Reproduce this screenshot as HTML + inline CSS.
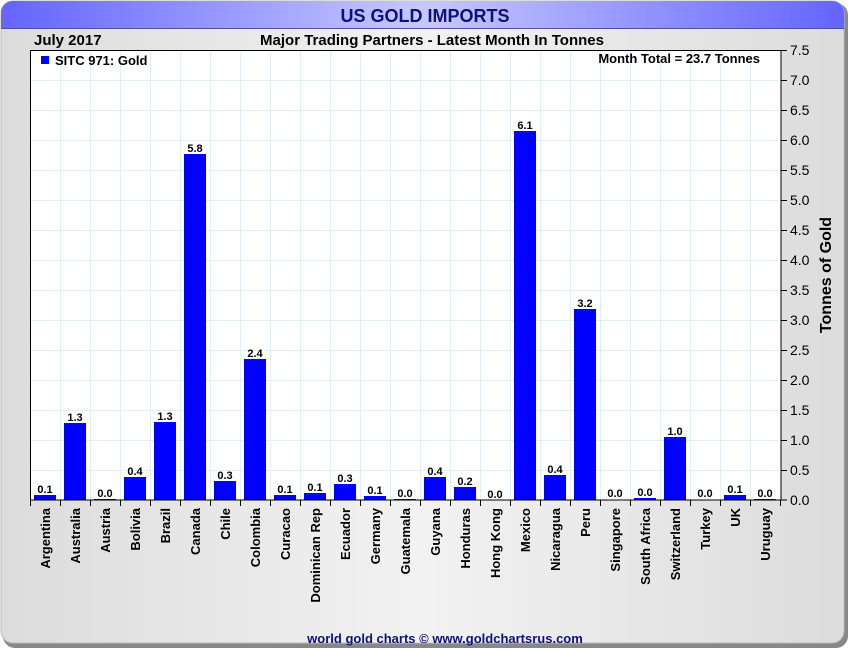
<!DOCTYPE html>
<html><head><meta charset="utf-8"><style>
html,body{margin:0;padding:0;background:#fff;width:850px;height:650px;overflow:hidden}
svg{display:block;font-family:"Liberation Sans",Arial,sans-serif}
</style></head><body>
<svg width="850" height="650" viewBox="0 0 850 650" xmlns="http://www.w3.org/2000/svg">
<defs>
<linearGradient id="tb" x1="0" x2="1" y1="0" y2="0">
<stop offset="0" stop-color="#6464ff"/><stop offset="0.5" stop-color="#c8c8ff"/><stop offset="1" stop-color="#6464ff"/>
</linearGradient>
<linearGradient id="bg" x1="0" x2="1" y1="0" y2="0">
<stop offset="0" stop-color="#dcdcdc"/><stop offset="0.5" stop-color="#f2f2f2"/><stop offset="1" stop-color="#dcdcdc"/>
</linearGradient>
</defs>
<rect x="0" y="0" width="850" height="650" fill="#fff"/>
<rect x="3" y="3" width="845" height="645" rx="12" fill="#888"/>
<rect x="1" y="1" width="843" height="642" rx="12" fill="url(#bg)" stroke="#bbb"/>
<path d="M1 28 V13 A12 12 0 0 1 13 1 H832 A12 12 0 0 1 844 13 V28 Z" fill="url(#tb)"/>
<line x1="1" y1="28.5" x2="844" y2="28.5" stroke="#5050a0"/>
<text x="425" y="22" text-anchor="middle" font-size="18" font-weight="bold" fill="#10107a">US GOLD IMPORTS</text>
<text x="34" y="45" font-size="15" font-weight="bold">July 2017</text>
<text x="432" y="45" text-anchor="middle" font-size="15" font-weight="bold">Major Trading Partners - Latest Month In Tonnes</text>
<rect x="30" y="50" width="751" height="450" fill="#fff"/>
<g stroke="#dff0f8" stroke-width="1">
<path d="M60.5 50V500M90.5 50V500M120.5 50V500M150.5 50V500M180.5 50V500M210.5 50V500M240.5 50V500M270.5 50V500M300.5 50V500M330.5 50V500M360.5 50V500M390.5 50V500M420.5 50V500M450.5 50V500M480.5 50V500M510.5 50V500M540.5 50V500M570.5 50V500M600.5 50V500M630.5 50V500M660.5 50V500M690.5 50V500M720.5 50V500M750.5 50V500"/>
<path d="M30 80.5H781M30 110.5H781M30 140.5H781M30 170.5H781M30 200.5H781M30 230.5H781M30 260.5H781M30 290.5H781M30 320.5H781M30 350.5H781M30 380.5H781M30 410.5H781M30 440.5H781M30 470.5H781"/>
</g>
<g fill="#0000ff">
<rect x="34" y="495" width="22" height="5"/>
<rect x="64" y="423" width="22" height="77"/>
<rect x="94" y="499" width="22" height="1"/>
<rect x="124" y="477" width="22" height="23"/>
<rect x="154" y="422" width="22" height="78"/>
<rect x="184" y="154" width="22" height="346"/>
<rect x="214" y="481" width="22" height="19"/>
<rect x="244" y="359" width="22" height="141"/>
<rect x="274" y="495" width="22" height="5"/>
<rect x="304" y="493" width="22" height="7"/>
<rect x="334" y="484" width="22" height="16"/>
<rect x="364" y="496" width="22" height="4"/>
<rect x="394" y="499" width="22" height="1"/>
<rect x="424" y="477" width="22" height="23"/>
<rect x="454" y="487" width="22" height="13"/>
<rect x="514" y="131" width="22" height="369"/>
<rect x="544" y="475" width="22" height="25"/>
<rect x="574" y="309" width="22" height="191"/>
<rect x="634" y="498" width="22" height="2"/>
<rect x="664" y="437" width="22" height="63"/>
<rect x="724" y="495" width="22" height="5"/>
<rect x="754" y="499" width="22" height="1"/>
</g>
<g font-size="11" font-weight="bold" text-anchor="middle" fill="#000">
<text x="45" y="493">0.1</text><text x="75" y="421">1.3</text><text x="105" y="497">0.0</text>
<text x="135" y="475">0.4</text><text x="165" y="420">1.3</text><text x="195" y="152">5.8</text>
<text x="225" y="479">0.3</text><text x="255" y="357">2.4</text><text x="285" y="493">0.1</text>
<text x="315" y="491">0.1</text><text x="345" y="482">0.3</text><text x="375" y="494">0.1</text>
<text x="405" y="497">0.0</text><text x="435" y="475">0.4</text><text x="465" y="485">0.2</text>
<text x="495" y="498">0.0</text><text x="525" y="129">6.1</text><text x="555" y="473">0.4</text>
<text x="585" y="307">3.2</text><text x="615" y="497">0.0</text><text x="645" y="496">0.0</text>
<text x="675" y="435">1.0</text><text x="705" y="497">0.0</text><text x="735" y="493">0.1</text>
<text x="765" y="497">0.0</text>
</g>
<rect x="30.5" y="50.5" width="750.5" height="449.5" fill="none" stroke="#000"/>
<g stroke="#000">
<path d="M30.5 500V506M60.5 500V506M90.5 500V506M120.5 500V506M150.5 500V506M180.5 500V506M210.5 500V506M240.5 500V506M270.5 500V506M300.5 500V506M330.5 500V506M360.5 500V506M390.5 500V506M420.5 500V506M450.5 500V506M480.5 500V506M510.5 500V506M540.5 500V506M570.5 500V506M600.5 500V506M630.5 500V506M660.5 500V506M690.5 500V506M720.5 500V506M750.5 500V506M780.5 500V506"/>
<path d="M781 50.5H787M781 80.5H787M781 110.5H787M781 140.5H787M781 170.5H787M781 200.5H787M781 230.5H787M781 260.5H787M781 290.5H787M781 320.5H787M781 350.5H787M781 380.5H787M781 410.5H787M781 440.5H787M781 470.5H787M781 500H787"/>
</g>
<g font-size="14" fill="#000">
<text x="790" y="55">7.5</text><text x="790" y="85">7.0</text><text x="790" y="115">6.5</text>
<text x="790" y="145">6.0</text><text x="790" y="175">5.5</text><text x="790" y="205">5.0</text>
<text x="790" y="235">4.5</text><text x="790" y="265">4.0</text><text x="790" y="295">3.5</text>
<text x="790" y="325">3.0</text><text x="790" y="355">2.5</text><text x="790" y="385">2.0</text>
<text x="790" y="415">1.5</text><text x="790" y="445">1.0</text><text x="790" y="475">0.5</text>
<text x="790" y="505">0.0</text>
</g>
<text transform="translate(831 275) rotate(-90)" text-anchor="middle" font-size="16" font-weight="bold">Tonnes of Gold</text>
<rect x="41" y="56" width="8" height="8" fill="#0000ff"/>
<text x="55" y="65" font-size="13" font-weight="bold">SITC 971: Gold</text>
<text x="760" y="63" text-anchor="end" font-size="13" font-weight="bold">Month Total = 23.7 Tonnes</text>
<g font-size="13" font-weight="bold" text-anchor="end" fill="#000">
<text transform="translate(50 508) rotate(-90)">Argentina</text>
<text transform="translate(80 508) rotate(-90)">Australia</text>
<text transform="translate(110 508) rotate(-90)">Austria</text>
<text transform="translate(140 508) rotate(-90)">Bolivia</text>
<text transform="translate(170 508) rotate(-90)">Brazil</text>
<text transform="translate(200 508) rotate(-90)">Canada</text>
<text transform="translate(230 508) rotate(-90)">Chile</text>
<text transform="translate(260 508) rotate(-90)">Colombia</text>
<text transform="translate(290 508) rotate(-90)">Curacao</text>
<text transform="translate(320 508) rotate(-90)">Dominican Rep</text>
<text transform="translate(350 508) rotate(-90)">Ecuador</text>
<text transform="translate(380 508) rotate(-90)">Germany</text>
<text transform="translate(410 508) rotate(-90)">Guatemala</text>
<text transform="translate(440 508) rotate(-90)">Guyana</text>
<text transform="translate(470 508) rotate(-90)">Honduras</text>
<text transform="translate(500 508) rotate(-90)">Hong Kong</text>
<text transform="translate(530 508) rotate(-90)">Mexico</text>
<text transform="translate(560 508) rotate(-90)">Nicaragua</text>
<text transform="translate(590 508) rotate(-90)">Peru</text>
<text transform="translate(620 508) rotate(-90)">Singapore</text>
<text transform="translate(650 508) rotate(-90)">South Africa</text>
<text transform="translate(680 508) rotate(-90)">Switzerland</text>
<text transform="translate(710 508) rotate(-90)">Turkey</text>
<text transform="translate(740 508) rotate(-90)">UK</text>
<text transform="translate(770 508) rotate(-90)">Uruguay</text>
</g>
<text x="445" y="643" text-anchor="middle" font-size="13" font-weight="bold" fill="#10107a">world gold charts © www.goldchartsrus.com</text>
</svg>
</body></html>
